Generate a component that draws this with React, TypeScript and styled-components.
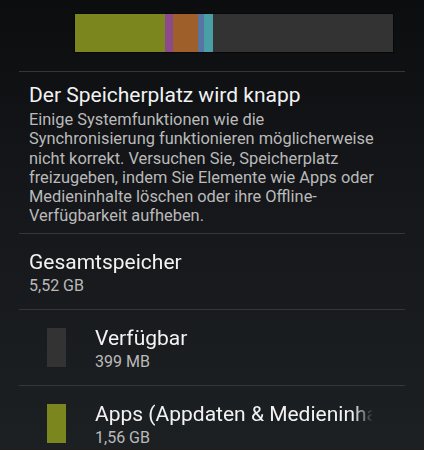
import styled, { createGlobalStyle } from "styled-components";

const GlobalStyle = createGlobalStyle`
    html, body {
        margin: 0;
        padding: 0;
    }
    body {
        width: 424px;
        height: 450px;
        overflow: hidden;
        background: linear-gradient(180deg, #0b0d0f 0%, #15171a 45%, #1d2023 100%);
        font-family: Roboto, "Noto Sans", "Liberation Sans", sans-serif;
        -webkit-font-smoothing: antialiased;
    }
`;

const Screen = styled.div`
    display: flex;
    flex-direction: column;
`;

const Section = styled.div`
    margin: 0 19px;
    border-bottom: 1px solid #33363a;
`;

const BarSection = styled(Section)`
    display: flex;
    padding: 14px 0 19px 56px;
`;

const UsageBar = styled.div`
    display: flex;
    width: 318px;
    height: 38px;
    background: #333333;
    outline: 1px solid #080808;
`;

const Segment = styled.div<{ $color: string }>`
    height: 100%;
    background: ${(p) => p.$color};
`;

const Warning = styled(Section)`
    padding: 10px 18px 7px 10px;
`;

const WarningTitle = styled.div`
    color: #f2f2f2;
    font-size: 21px;
    line-height: 26px;
    margin-bottom: 2px;
`;

const WarningText = styled.div`
    color: #bababa;
    font-size: 16.4px;
    line-height: 19.3px;
`;

const Row = styled(Section)`
    display: flex;
    align-items: flex-start;
    height: 76px;
    box-sizing: border-box;
    padding: 15px 10px 0;
`;

const Swatch = styled.div<{ $color: string }>`
    width: 19px;
    height: 39px;
    margin: 3px 29px 0 18px;
    background: ${(p) => p.$color};
`;

const RowText = styled.div`
    display: flex;
    flex-direction: column;
    min-width: 0;
    flex: 1;
    padding-right: 22px;
`;

const RowTitle = styled.div`
    color: #f2f2f2;
    font-size: 21px;
    line-height: 26px;
    white-space: nowrap;
    overflow: hidden;
    -webkit-mask-image: linear-gradient(90deg, #000 calc(100% - 20px), transparent);
    mask-image: linear-gradient(90deg, #000 calc(100% - 20px), transparent);
`;

const RowSummary = styled.div`
    color: #bababa;
    font-size: 16px;
    line-height: 22px;
`;

const segments = [
    { color: "#7b861f", width: 90 },
    { color: "#8b4a8c", width: 8 },
    { color: "#9e5f2b", width: 25 },
    { color: "#5675a3", width: 6 },
    { color: "#4a9ea6", width: 9 },
];

const items = [
    { title: "Verfügbar", summary: "399 MB", color: "#333333" },
    { title: "Apps (Appdaten & Medieninhalte)", summary: "1,56 GB", color: "#7b861f" },
];

export default function App() {
    return (
        <>
            <GlobalStyle />
            <Screen>
                <BarSection>
                    <UsageBar>
                        {segments.map((s, i) => (
                            <Segment key={i} $color={s.color} style={{ width: s.width }} />
                        ))}
                    </UsageBar>
                </BarSection>
                <Warning>
                    <WarningTitle>Der Speicherplatz wird knapp</WarningTitle>
                    <WarningText>
                        Einige Systemfunktionen wie die Synchronisierung funktionieren möglicherweise
                        nicht korrekt. Versuchen Sie, Speicherplatz freizugeben, indem Sie Elemente wie
                        Apps oder Medieninhalte löschen oder ihre Offline-Verfügbarkeit aufheben.
                    </WarningText>
                </Warning>
                <Row>
                    <RowText>
                        <RowTitle>Gesamtspeicher</RowTitle>
                        <RowSummary>5,52 GB</RowSummary>
                    </RowText>
                </Row>
                {items.map((item) => (
                    <Row key={item.title}>
                        <Swatch $color={item.color} />
                        <RowText>
                            <RowTitle>{item.title}</RowTitle>
                            <RowSummary>{item.summary}</RowSummary>
                        </RowText>
                    </Row>
                ))}
            </Screen>
        </>
    );
}
